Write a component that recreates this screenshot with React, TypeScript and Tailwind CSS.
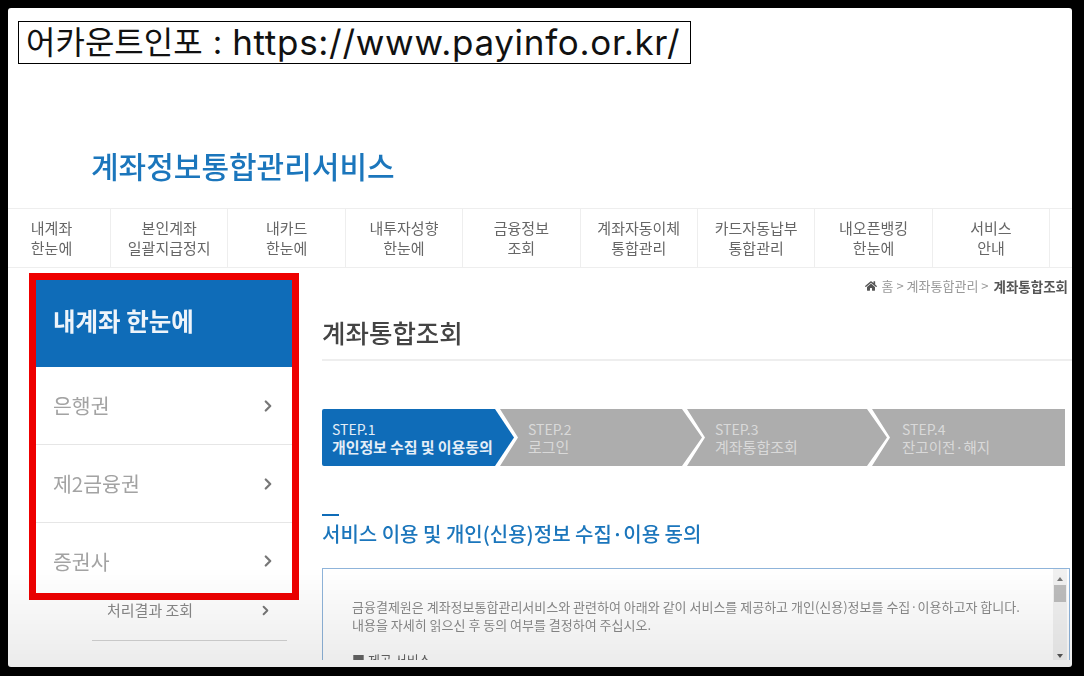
import { ChevronRight } from 'lucide-react'
import { FaHome } from 'react-icons/fa'

const KR = 'font-["Noto_Sans_CJK_KR","Noto_Sans",sans-serif]'

const NAV = [
  ['내계좌', '한눈에'],
  ['본인계좌', '일괄지급정지'],
  ['내카드', '한눈에'],
  ['내투자성향', '한눈에'],
  ['금융정보', '조회'],
  ['계좌자동이체', '통합관리'],
  ['카드자동납부', '통합관리'],
  ['내오픈뱅킹', '한눈에'],
  ['서비스', '안내'],
]

const SIDE = ['은행권', '제2금융권', '증권사']

export default function App() {
  return (
    <div className={`h-[676px] w-[1084px] overflow-hidden bg-black pl-2 pt-2 ${KR}`}>
      <div className="relative h-[659px] w-[1064px] overflow-hidden rounded-[3px] bg-white">
        {/* Banner */}
        <div className="ml-[10px] mt-[13px] flex h-[43px] w-[673px] items-center whitespace-nowrap border border-black pl-[7px] leading-none text-[#111] font-['Inter','Noto_Sans_CJK_KR',sans-serif]">
          <span className="text-[32px]">어카운트인포</span>
          <span className="ml-[10px] text-[33px]">:</span>
          <span className="ml-[10px] text-[35px] tracking-[0.7px]">https://www.payinfo.or.kr/</span>
        </div>

        <div className="blur-[0.7px]">
          {/* Logo title */}
          <div className="ml-[83px] mt-[81px] h-10 text-[30px] font-medium leading-10 text-[#1b76bc]">
            계좌정보통합관리서비스
          </div>

          {/* Top nav */}
          <div className="mt-[23px] flex h-[60px] border-y border-[#eeeeee] text-[15px] leading-[20px] text-[#666]">
            {NAV.map((n, i) => (
              <div
                key={i}
                className={`flex shrink-0 flex-col items-center justify-center border-r border-[#eeeeee] ${
                  i === 0 ? 'w-[103px] pr-[15px]' : 'w-[117.4px]'
                }`}
              >
                <div>{n[0]}</div>
                <div>{n[1]}</div>
              </div>
            ))}
          </div>

          <div className="mt-[5px] flex">
            {/* Sidebar */}
            <div className="ml-[21px] w-[270px] shrink-0">
              <div className="border-[7px] border-[#ee0000]">
                <div className="flex h-[87px] items-center bg-[#0f6cb8] pb-[4px] pl-[17px] text-[24.5px] font-bold text-[#eef4fa]">
                  내계좌 한눈에
                </div>
                {SIDE.map((s, i) => (
                  <div
                    key={s}
                    className={`flex items-center justify-between pl-[17px] pr-[15px] text-[20.5px] text-[#a3a3a3] ${
                      i < 2 ? 'h-[78px] border-b border-[#e6e6e6]' : 'h-[70px] pt-[6px]'
                    }`}
                  >
                    {s}
                    <ChevronRight size={18} strokeWidth={3} className="text-[#777]" />
                  </div>
                ))}
              </div>
              <div className="ml-[63px] flex h-[41px] w-[195px] items-center justify-between border-b border-[#d5d5d5] pb-[19px] pl-[15px] pr-[14px] text-[15px] text-[#888]">
                처리결과 조회
                <ChevronRight size={15} strokeWidth={3} className="text-[#777]" />
              </div>
            </div>

            {/* Content */}
            <div className="ml-[23px] min-w-0 flex-1">
              <div className="mt-[5px] flex h-4 items-center justify-end gap-[5px] whitespace-nowrap pr-[4px] text-[13px] text-[#999]">
                <FaHome size={12} className="text-[#555]" />
                <span>홈 &gt; 계좌통합관리 &gt;</span>
                <span className="text-[13.5px] font-bold text-[#555]">계좌통합조회</span>
              </div>

              <div className="mt-[20px] h-[47px] border-b-2 border-[#eeeeee] text-[25.5px] font-medium leading-9 text-[#444]">
                계좌통합조회
              </div>

              {/* Steps */}
              <div className="mt-[48px] flex h-[57px] w-[743px] text-[14px] leading-[17px]">
                <div className="flex w-[192px] shrink-0 flex-col justify-center rounded-l-[2px] bg-[#0f6cb8] pl-[10px] text-[#e4eef7] [clip-path:polygon(0_0,173px_0,100%_50%,173px_100%,0_100%)]">
                  <div>STEP.1</div>
                  <div className="whitespace-nowrap text-[15px] font-bold tracking-[-0.1px]">개인정보 수집 및 이용동의</div>
                </div>
                <div className="-ml-[14px] flex w-[202px] shrink-0 flex-col justify-center bg-[#adadad] pl-[28px] text-[#d9d9d9] [clip-path:polygon(0_0,182px_0,100%_50%,182px_100%,0_100%,18px_50%)]">
                  <div>STEP.2</div>
                  <div className="text-[15px]">로그인</div>
                </div>
                <div className="-ml-[15px] flex w-[200px] shrink-0 flex-col justify-center bg-[#adadad] pl-[28px] text-[#d9d9d9] [clip-path:polygon(0_0,180px_0,100%_50%,180px_100%,0_100%,18px_50%)]">
                  <div>STEP.3</div>
                  <div className="text-[15px]">계좌통합조회</div>
                </div>
                <div className="-ml-[15px] flex w-[193px] shrink-0 flex-col justify-center bg-[#adadad] pl-[30px] text-[#d9d9d9] [clip-path:polygon(0_0,100%_0,100%_100%,0_100%,18px_50%)]">
                  <div>STEP.4</div>
                  <div className="text-[14.5px]">잔고이전·해지</div>
                </div>
              </div>

              {/* Section heading */}
              <div className="mt-[48px] h-[2px] w-[17px] bg-[#0f6cb8]" />
              <div className="mt-[3px] h-[30px] whitespace-nowrap text-[20px] font-medium leading-[30px] text-[#1b76bc]">
                서비스 이용 및 개인(신용)정보 수집·이용 동의
              </div>

              {/* Terms box */}
              <div className="relative mt-[19px] h-[92px] w-[748px] overflow-hidden border border-b-0 border-[#8fb4da] pl-[29px] pt-[29px] text-[13px] leading-[18px] text-[#8a8a8a]">
                <div className="whitespace-nowrap">
                  금융결제원은 계좌정보통합관리서비스와 관련하여 아래와 같이 서비스를 제공하고 개인(신용)정보를 수집·이용하고자 합니다.
                </div>
                <div className="whitespace-nowrap">내용을 자세히 읽으신 후 동의 여부를 결정하여 주십시오.</div>
                <div className="mt-[17px] text-[#666]">■ 제공 서비스</div>
                <div className="absolute right-[2px] top-0 flex h-full w-[14px] flex-col items-center bg-[#f1f1f1]">
                  <div className="mt-[8px] h-0 w-0 border-x-[3px] border-b-[4px] border-x-transparent border-b-[#777]" />
                  <div className="mt-[4px] h-[17px] w-[12px] bg-[#bdbdbd]" />
                  <div className="mt-auto mb-[2px] h-0 w-0 border-x-[3px] border-t-[4px] border-x-transparent border-t-[#555]" />
                </div>
              </div>
            </div>
          </div>
        </div>

        {/* Video fade at the bottom */}
        <div className="pointer-events-none absolute inset-x-0 bottom-0 h-[100px] bg-gradient-to-b from-transparent to-[#00000014]" />
      </div>
    </div>
  )
}
